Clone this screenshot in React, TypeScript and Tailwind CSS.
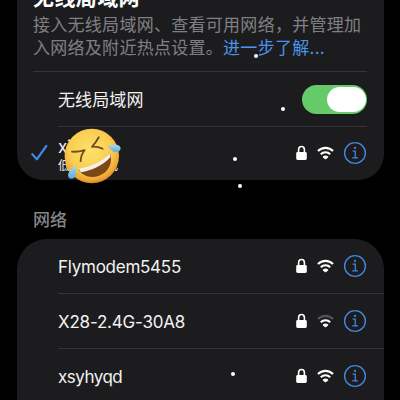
import React from "react";

function LockIcon() {
  return (
    <svg width="11" height="16" viewBox="0 0 11 16" className="shrink-0">
      <path d="M2.6 7.5V4.7a2.9 3.2 0 0 1 5.8 0v2.8" fill="none" stroke="#fff" strokeWidth="1.6" />
      <rect x="0.2" y="7" width="10.6" height="8" rx="1.4" fill="#fff" />
    </svg>
  );
}

function WifiIcon({ weak = false }: { weak?: boolean }) {
  return (
    <svg width="17" height="14" viewBox="0 0 17 14" className="shrink-0">
      <g fill="none" strokeWidth="2.1">
        <path d="M1 5.1a10.4 10.4 0 0 1 15 0" stroke={weak ? "#545456" : "#fff"} />
        <path d="M3.8 8.3a6.4 6.4 0 0 1 9.4 0" stroke="#fff" />
      </g>
      <path d="M8.5 12.8 6.3 11a3.3 3.3 0 0 1 4.4 0Z" fill="#fff" stroke="#fff" strokeWidth="1.1" strokeLinejoin="round" />
    </svg>
  );
}

function InfoIcon() {
  return (
    <svg width="24" height="24" viewBox="0 0 24 24" className="shrink-0" fill="none" stroke="#4385da">
      <circle cx="12" cy="12" r="10.4" strokeWidth="1.4" />
      <path d="M9.6 10.1h2.7v6.7M9.2 16.9h5.8" strokeWidth="1.3" />
      <circle cx="12" cy="6.9" r="1.15" fill="#4385da" stroke="none" />
    </svg>
  );
}

function Status({ weak = false }: { weak?: boolean }) {
  return (
    <div className="flex items-center">
      <LockIcon />
      <div className="ml-[10px] mr-[9px] flex"><WifiIcon weak={weak} /></div>
      <InfoIcon />
    </div>
  );
}

function LaughingFace() {
  return (
    <svg width="60" height="60" viewBox="0 0 60 60" className="absolute left-[62px] top-[126px]">
      <defs>
        <radialGradient id="face" cx="0.47" cy="0.4" r="0.6">
          <stop offset="0" stopColor="#fce26c" />
          <stop offset="0.65" stopColor="#f9cd50" />
          <stop offset="0.9" stopColor="#efa936" />
          <stop offset="1" stopColor="#d88726" />
        </radialGradient>
        <linearGradient id="tear" x1="0" y1="0" x2="0" y2="1">
          <stop offset="0" stopColor="#add9f0" />
          <stop offset="1" stopColor="#5eaada" />
        </linearGradient>
      </defs>
      <circle cx="29.8" cy="30" r="27.2" fill="url(#face)" />
      <path d="M16.5 43C27 42 41 36 47.8 26.8C51.5 36 47 46.5 36.5 50C28 52.8 19.5 49.5 16.5 43Z" fill="#7d4818" />
      <path d="M16.6 42.4C28 41 40 36 47.6 27L48.6 31C40 40 30 44.5 18.8 46.2Z" fill="#f7f0e6" />
      <path d="M10 25.6Q16 26.2 22.6 24.2Q18.8 28.8 18.6 35.2" fill="none" stroke="#74491c" strokeWidth="1.8" strokeLinecap="round" strokeLinejoin="round" />
      <path d="M36.8 11.2Q33.8 16.6 30 20.8Q35.5 20.2 40.6 22.8" fill="none" stroke="#74491c" strokeWidth="1.8" strokeLinecap="round" strokeLinejoin="round" />
      <path d="M46 21.2C50 17.5 56.5 17.6 58.4 21.2C59.7 24.5 55 27.3 51.5 25.6C49.4 24.5 48 22.3 46 21.2Z" fill="url(#tear)" />
      <path d="M13.8 39.5C11.2 40.6 6.2 45.2 6 49.5C6.2 53 11 54.2 13.4 50.6C15.4 47.5 13.2 43 13.8 39.5Z" fill="url(#tear)" />
    </svg>
  );
}

const networks = [
  { name: "Flymodem5455", weak: false, spacing: "tracking-[-0.26px]" },
  { name: "X28-2.4G-30A8", weak: true, spacing: "tracking-[-0.2px]" },
  { name: "xsyhyqd", weak: false, spacing: "tracking-[-0.5px]" },
];

export default function App() {
  return (
    <div className="relative h-[400px] w-[400px] overflow-hidden bg-black pl-[17px] pr-4 font-['Inter','Noto_Sans_CJK_SC',sans-serif] text-[#f2f2f2]">
      <section className="h-[180px] overflow-hidden rounded-b-[26px] bg-[#1c1c1e]">
        <div className="flex h-[71px] flex-col pl-4">
          <h1 className="-mt-[17px] h-[31px] whitespace-nowrap text-[21px] font-bold leading-[30px] tracking-[0.4px] text-white">无线局域网</h1>
          <p className="whitespace-nowrap text-[17px] leading-[23px] tracking-[0.28px] text-[#808084]">
            接入无线局域网、查看可用网络，并管理加<br />
            入网络及附近热点设置。<span className="text-[#4c94ed]">进一步了解...</span>
          </p>
        </div>
        <div className="ml-4 mr-[17px] h-[55px] border-t border-[#353537]">
          <div className="flex h-full items-center justify-between pl-[25px]">
            <span className="pt-[3px] text-[17px] tracking-[0.1px]">无线局域网</span>
            <div className="mt-px flex h-[29px] w-[65px] items-center justify-end rounded-full bg-[#65cb69] pr-[1px]">
              <div className="h-[25px] w-[39px] rounded-full bg-white" />
            </div>
          </div>
        </div>
        <div className="flex h-[54px] pl-[14px] pr-[17px]">
          <svg width="17" height="18" viewBox="0 0 17 18" className="mt-[18px]">
            <path d="m1.3 10.2 4.5 5.1L15.3 2" fill="none" stroke="#4187e8" strokeWidth="2.2" strokeLinecap="round" strokeLinejoin="round" />
          </svg>
          <div className="ml-[10px] flex flex-1 justify-between border-t border-[#353537]">
            <div className="flex flex-col">
              <span className="mt-[9px] text-[17px] leading-[22px] tracking-[-0.3px]">xi</span>
              <span className="text-[12px] leading-[15px]">低数据模式</span>
            </div>
            <div className="flex pb-px"><Status /></div>
          </div>
        </div>
      </section>

      <h2 className="flex h-[59px] items-center pl-4 pt-[22px] text-[17px] font-medium text-[#858589]">网络</h2>

      <section className="h-[180px] overflow-hidden rounded-t-[30px] bg-[#1c1c1e] pl-[41px]">
        {networks.map((n) => (
          <div key={n.name} className="flex h-[55px] items-center justify-between border-b border-[#353537] pr-[17px]">
            <span className={`pt-[2px] text-[17px] leading-[22px] ${n.spacing}`}>{n.name}</span>
            <Status weak={n.weak} />
          </div>
        ))}
      </section>

      <LaughingFace />
      <i className="absolute left-[254px] top-[54px] h-[4px] w-[4px] rounded-full bg-white" />
      <i className="absolute left-[281px] top-[107px] h-[4px] w-[4px] rounded-full bg-white" />
      <i className="absolute left-[233px] top-[157px] h-[4px] w-[4px] rounded-full bg-white" />
      <i className="absolute left-[238px] top-[184px] h-[4px] w-[4px] rounded-full bg-white" />
      <i className="absolute left-[231px] top-[372px] h-[4px] w-[4px] rounded-full bg-white" />
    </div>
  );
}
